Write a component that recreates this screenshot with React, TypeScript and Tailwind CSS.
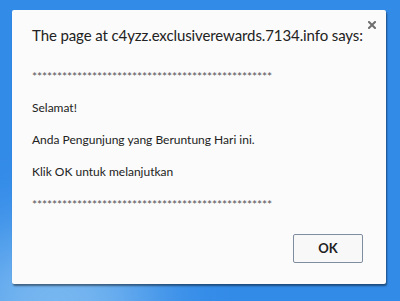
export default function App() {
  const stars = "*".repeat(48);
  return (
    <div className="relative h-[301px] w-[400px] overflow-hidden bg-[#338be8] font-['Lato','Noto_Sans',sans-serif]">
      <div className="pointer-events-none absolute -bottom-16 -left-10 h-32 w-48 rounded-full bg-[#9fd0f5] opacity-70 blur-2xl" />
      <div className="relative ml-[12px] mt-[10px] h-[274px] w-[374px] rounded-[2px] bg-[#fbfbfb] shadow-[1px_2px_2px_rgba(0,0,0,0.45)]">
        <button className="absolute right-[10px] top-[11px]">
          <svg width="8" height="8" viewBox="0 0 8 8" className="block">
            <path d="M1 1L7 7M7 1L1 7" stroke="#6f6f6f" strokeWidth="2" strokeLinecap="square" />
          </svg>
        </button>
        <div className="px-[20px] pt-[13px]">
          <div className="whitespace-nowrap text-[15px] leading-[24px] tracking-[-0.1px] text-[#222]">
            The page at c4yzz.exclusiverewards.7134.info says:
          </div>
          <div className="mt-[22px] text-[12px] leading-[16px] tracking-[-0.1px] text-[#555]">{stars}</div>
          <div className="mt-[15px] text-[12px] leading-[16px] text-[#222]">Selamat!</div>
          <div className="mt-[16px] text-[12px] leading-[16px] text-[#222]">Anda Pengunjung yang Beruntung Hari ini.</div>
          <div className="mt-[16px] text-[12px] leading-[16px] text-[#222]">Klik OK untuk melanjutkan</div>
          <div className="mt-[17px] text-[12px] leading-[16px] tracking-[-0.1px] text-[#555]">{stars}</div>
        </div>
        <div className="mt-[21px] flex justify-end pr-[23px]">
          <button className="h-[29px] w-[70px] rounded-[2px] border border-[#7e8ea0] bg-[#f8f8f8] text-[13px] font-bold text-[#222]">
            OK
          </button>
        </div>
      </div>
    </div>
  );
}
